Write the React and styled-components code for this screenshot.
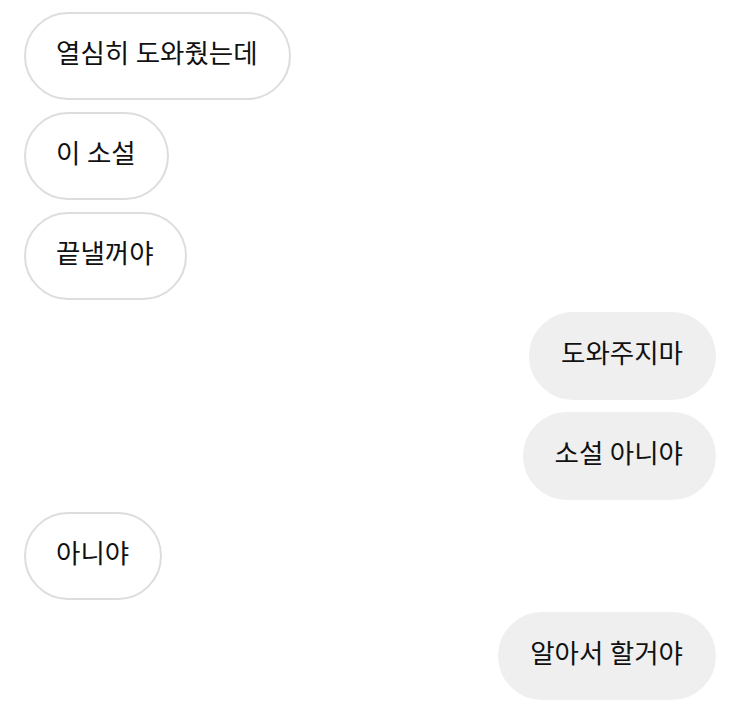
import React from 'react';
import styled, { createGlobalStyle } from 'styled-components';

const GlobalStyle = createGlobalStyle`
  body {
    margin: 0;
    background: #fff;
    font-family: Roboto, "Noto Sans CJK KR", sans-serif;
  }
`;

const messages = [
  { id: 1, text: '열심히 도와줬는데', mine: false },
  { id: 2, text: '이 소설', mine: false },
  { id: 3, text: '끝낼꺼야', mine: false },
  { id: 4, text: '도와주지마', mine: true },
  { id: 5, text: '소설 아니야', mine: true },
  { id: 6, text: '아니야', mine: false },
  { id: 7, text: '알아서 할거야', mine: true }
];

export default function App() {
  return (
    <>
      <GlobalStyle />
      <Thread>
        {messages.map((msg) => (
          <Row key={msg.id} mine={msg.mine}>
            <Bubble mine={msg.mine}>{msg.text}</Bubble>
          </Row>
        ))}
      </Thread>
    </>
  );
}

const Thread = styled.div`
  display: flex;
  flex-direction: column;
  gap: 12px;
  padding: 12px 24px;
`;

const Row = styled.div`
  display: flex;
  justify-content: ${(props) => (props.mine ? 'flex-end' : 'flex-start')};
`;

const Bubble = styled.div`
  box-sizing: border-box;
  height: 88px;
  display: flex;
  align-items: center;
  padding: 0 31px 4px 30px;
  border-radius: 44px;
  border: 2px solid ${(props) => (props.mine ? '#efefef' : '#dddddd')};
  background: ${(props) => (props.mine ? '#efefef' : '#ffffff')};
  color: #111;
  font-size: 26.5px;
  line-height: 1;
  white-space: nowrap;
`;
